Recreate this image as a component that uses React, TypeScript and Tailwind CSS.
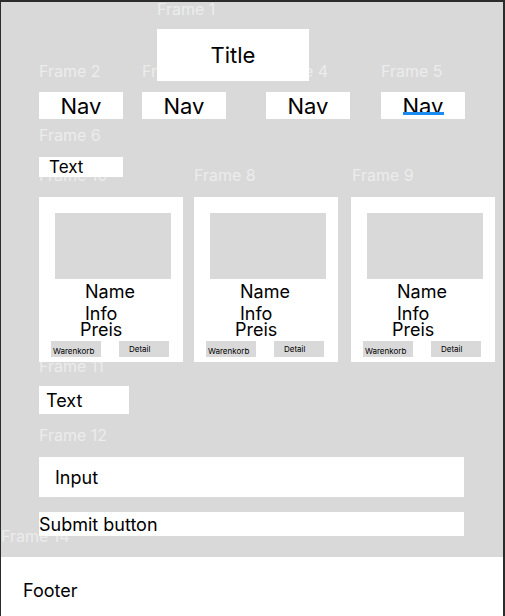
import React from "react";

const font = { fontFamily: "Inter, 'Liberation Sans', sans-serif" };

function Label({ text, cls }: { text: string; cls: string }) {
  return (
    <div className={`absolute whitespace-nowrap text-[16px] leading-none text-[#ececec] ${cls}`}>
      {text}
    </div>
  );
}

function Card({ ml }: { ml: string }) {
  return (
    <div className={`relative flex h-[165px] w-[144px] flex-col bg-white px-[16px] pt-[16px] ${ml}`}>
      <div className="h-[66px] w-[116px] bg-[#d9d9d9]" />
      <div className="ml-[30px] mt-[4px] text-[18px] leading-[18px] text-black">Name</div>
      <div className="ml-[30px] mt-[4px] text-[18px] leading-[18px] text-black">Info</div>
      <div className="ml-[25px] mt-[-2px] text-[18px] leading-[18px] text-black">Preis</div>
      <div className="-mx-[4px] mt-[2px] flex">
        <div className="h-[16px] w-[50px] bg-[#d9d9d9] pl-[2px] pt-[6px] text-[8px] leading-none text-black">
          Warenkorb
        </div>
        <div className="ml-[18px] h-[16px] w-[50px] bg-[#d9d9d9] pl-[10px] pt-[4px] text-[8px] leading-none text-black">
          Detail
        </div>
      </div>
    </div>
  );
}

export default function App() {
  return (
    <div
      className="relative flex h-[616px] w-[505px] flex-col overflow-hidden bg-[#2c2c2c] pl-[1px] pr-[2px] pt-[2px]"
      style={font}
    >
      <Label text="Frame 1" cls="left-[157px] top-[1px]" />
      <Label text="Frame 2" cls="left-[39px] top-[63px]" />
      <Label text="Frame 3" cls="left-[142px] top-[63px]" />
      <Label text="Frame 4" cls="left-[266px] top-[63px]" />
      <Label text="Frame 5" cls="left-[381px] top-[63px]" />
      <Label text="Frame 6" cls="left-[39px] top-[127px]" />
      <Label text="Frame 10" cls="left-[39px] top-[167px]" />
      <Label text="Frame 8" cls="left-[194px] top-[167px]" />
      <Label text="Frame 9" cls="left-[352px] top-[167px]" />
      <Label text="Frame 11" cls="left-[39px] top-[358px]" />
      <Label text="Frame 12" cls="left-[39px] top-[427px]" />
      <Label text="Frame 13" cls="left-[39px] top-[483px]" />
      <Label text="Frame 14" cls="left-[1px] top-[528px]" />

      <div className="flex h-[555px] flex-col bg-[#d9d9d9]">
        <div className="relative ml-[156px] mt-[27px] flex h-[52px] w-[152px] items-center justify-center bg-white text-[22px] leading-none text-black">
          Title
        </div>

        <div className="ml-[38px] mt-[11px] flex">
          <div className="relative flex h-[27px] w-[84px] items-center justify-center bg-white text-[22px] leading-none text-black">
            Nav
          </div>
          <div className="relative ml-[19px] flex h-[27px] w-[84px] items-center justify-center bg-white text-[22px] leading-none text-black">
            Nav
          </div>
          <div className="relative ml-[40px] flex h-[27px] w-[84px] items-center justify-center bg-white text-[22px] leading-none text-black">
            Nav
          </div>
          <div className="relative ml-[31px] flex h-[27px] w-[84px] items-center justify-center bg-white text-[22px] leading-none text-black">
            Nav
            <div className="absolute left-[22px] top-[20px] h-[3px] w-[41px] bg-[#1a8cf0]" />
          </div>
        </div>

        <div className="relative ml-[38px] mt-[38px] flex h-[20px] w-[84px] items-center bg-white pl-[10px] pt-[1px] text-[17px] leading-none text-black">
          Text
        </div>

        <div className="ml-[38px] mt-[20px] flex">
          <Card ml="" />
          <Card ml="ml-[11px]" />
          <Card ml="ml-[13px]" />
        </div>

        <div className="relative ml-[38px] mt-[24px] flex h-[28px] w-[90px] items-center bg-white pl-[7px] pt-[1px] text-[18px] leading-none text-black">
          Text
        </div>

        <div className="relative ml-[38px] mt-[43px] flex h-[40px] w-[425px] items-center bg-white pl-[16px] pt-[1px] text-[18px] leading-none text-black">
          Input
        </div>

        <div className="relative ml-[38px] mt-[15px] flex h-[24px] w-[425px] items-center bg-white pl-0 pt-[1px] text-[18px] leading-none text-black">
          Submit button
        </div>
      </div>

      <div className="h-[59px] bg-white pl-[22px] pt-[25px] text-[18px] leading-[18px] text-black">
        Footer
      </div>
    </div>
  );
}
